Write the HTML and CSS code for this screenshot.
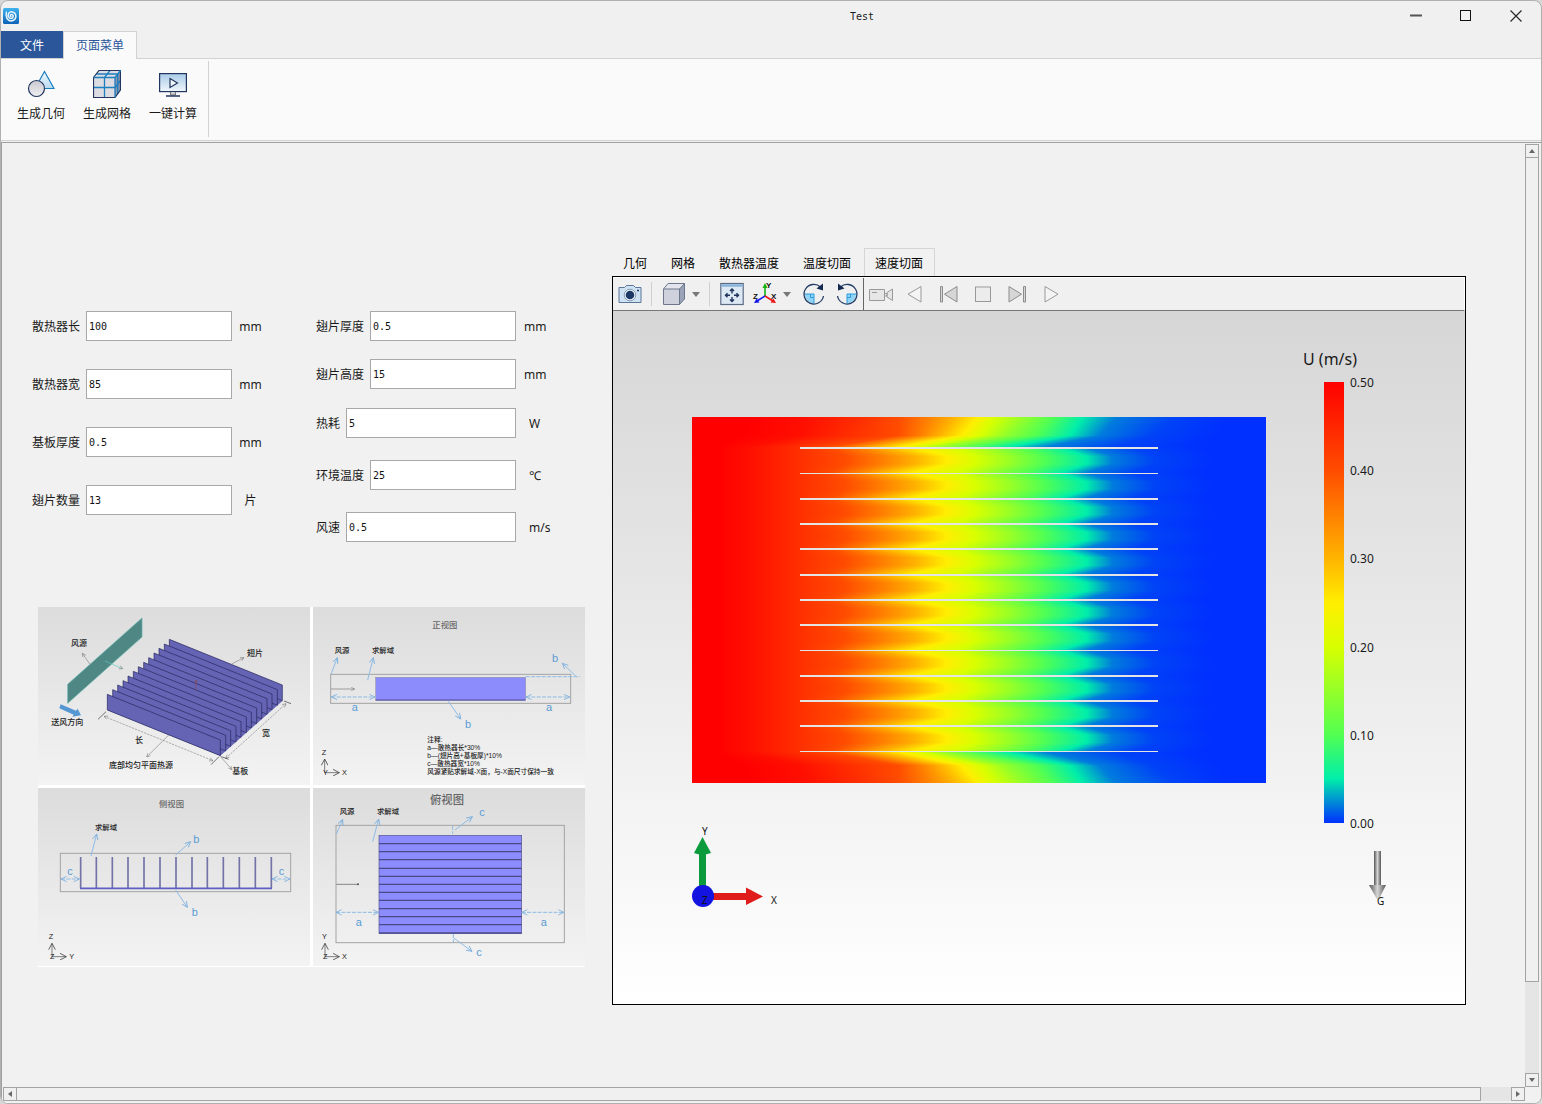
FILE: index.html
```html
<!DOCTYPE html>
<html lang="zh-CN">
<head>
    <meta charset="UTF-8">
    <meta name="viewport" content="width=device-width, initial-scale=1.0">
    <title>Test</title>
    <link rel="stylesheet" href="styles.css">
</head>
<body>
<div class="window">
    <header class="titlebar">
        <svg class="app-icon" viewBox="0 0 16 16">
            <defs>
                <linearGradient id="app-bg" x1="0" y1="0" x2="0" y2="1">
                    <stop offset="0" stop-color="#3fb2ee"/>
                    <stop offset="1" stop-color="#0d62b8"/>
                </linearGradient>
            </defs>
            <rect width="16" height="16" rx="1.5" fill="url(#app-bg)"/>
            <path d="M3.4 4.2C2.4 8.5 4 13 8.2 12.9C12 12.8 13.6 9.4 12.6 6.6C11.6 3.8 7.6 2.8 5.8 5.2C4.2 7.6 5.6 10.6 8.2 10.4C10.6 10.1 10.9 7 8.9 6.5C7.3 6.2 6.7 8.1 8 8.6" fill="none" stroke="#e8f6ff" stroke-width="1.5" stroke-linecap="round"/>
        </svg>
        <span class="window-title">Test</span>
        <div class="window-buttons">
            <button aria-label="最小化"><svg viewBox="0 0 12 12"><path d="M0 5.5H12" stroke="#555" stroke-width="2"/></svg></button>
            <button aria-label="最大化"><svg viewBox="0 0 12 12"><rect x=".5" y=".5" width="10" height="10" fill="none" stroke="#111"/></svg></button>
            <button aria-label="关闭"><svg viewBox="0 0 12 12"><path d="M.5 .5L11.5 11.5M11.5 .5L.5 11.5" stroke="#222" stroke-width="1.1"/></svg></button>
        </div>
    </header>

    <nav class="ribbon-tabs">
        <button class="ribbon-tab file">文件</button>
        <button class="ribbon-tab active">页面菜单</button>
    </nav>

    <div class="ribbon">
        <div class="ribbon-group">
            <button class="ribbon-button">
                <svg viewBox="0 0 28 28">
                    <defs>
                        <linearGradient id="soft-gray" x1="0" y1="0" x2="0" y2="1">
                            <stop offset="0" stop-color="#c9c9d0"/>
                            <stop offset="1" stop-color="#efeff2"/>
                        </linearGradient>
                        <linearGradient id="soft-blue" x1="0" y1="0" x2="0" y2="1">
                            <stop offset="0" stop-color="#f2f9fd"/>
                            <stop offset="1" stop-color="#b9daf0"/>
                        </linearGradient>
                        <linearGradient id="screen-blue" x1="0" y1="0" x2="0" y2="1">
                            <stop offset="0" stop-color="#a9cbe8"/>
                            <stop offset="1" stop-color="#f0f6fb"/>
                        </linearGradient>
                    </defs>
                    <path d="M17.5 1.5L27 18.5H8Z" fill="url(#soft-blue)" stroke="#1c7fc0" stroke-width="1.2"/>
                    <circle cx="9.5" cy="18.5" r="8" fill="url(#soft-gray)" stroke="#22355f" stroke-width="1.2"/>
                </svg>
                <span>生成几何</span>
            </button>
            <button class="ribbon-button">
                <svg viewBox="0 0 28 28">
                    <path d="M.5 7.5L6 .5H27.5L22 7.5V27.5H.5Z" fill="#dcdce2"/>
                    <path d="M22 7.5L27.5 .5V20L22 27.5Z" fill="#8b93ad"/>
                    <path d="M11.5 27.5V7.5L17 .5M.5 17.5H22L27.5 10.5M3.5 4H24.7V24" fill="none" stroke="#1c7fc0" stroke-width="1.3"/>
                    <path d="M.5 7.5L6 .5H27.5V20L22 27.5H.5Z" fill="none" stroke="#22355f" stroke-width="1.2"/>
                    <path d="M.5 7.5H22V27.5M22 7.5L27.5 .5" fill="none" stroke="#1c7fc0" stroke-width="1.3"/>
                </svg>
                <span>生成网格</span>
            </button>
            <button class="ribbon-button">
                <svg viewBox="0 0 28 28">
                    <rect x=".6" y="3.6" width="26.8" height="18" fill="url(#screen-blue)" stroke="#22355f" stroke-width="1.2"/>
                    <path d="M11 8.5V17.5L18.5 13Z" fill="#eef6fb" stroke="#22355f" stroke-width="1.2"/>
                    <path d="M11.5 22V25H16.5V22" fill="#ccc" stroke="#777"/>
                    <path d="M7 26H21" stroke="#22355f" stroke-width="1.4"/>
                </svg>
                <span>一键计算</span>
            </button>
        </div>
    </div>

    <div class="scroll-area">
        <main class="workspace">
            <section class="inputs">
                <form class="params">
                    <div class="param-column">
                        <div class="param"><label for="length">散热器长</label><input id="length" type="text" value="100"><span class="unit">mm</span></div>
                        <div class="param"><label for="width">散热器宽</label><input id="width" type="text" value="85"><span class="unit">mm</span></div>
                        <div class="param"><label for="base">基板厚度</label><input id="base" type="text" value="0.5"><span class="unit">mm</span></div>
                        <div class="param"><label for="count">翅片数量</label><input id="count" type="text" value="13"><span class="unit">片</span></div>
                    </div>
                    <div class="param-column right">
                        <div class="fin-params">
                            <div class="param"><label for="fin-thickness">翅片厚度</label><input id="fin-thickness" type="text" value="0.5"><span class="unit">mm</span></div>
                            <div class="param"><label for="fin-height">翅片高度</label><input id="fin-height" type="text" value="15"><span class="unit">mm</span></div>
                        </div>
                        <div class="condition-params">
                            <div class="param"><label for="heat">热耗</label><input id="heat" type="text" value="5"><span class="unit">W</span></div>
                            <div class="param"><label for="ambient">环境温度</label><input id="ambient" type="text" value="25"><span class="unit">℃</span></div>
                            <div class="param"><label for="speed">风速</label><input id="speed" type="text" value="0.5"><span class="unit">m/s</span></div>
                        </div>
                    </div>
                </form>

                <div class="figures">
                    <!-- isometric view -->
                    <svg class="figure" viewBox="24 21 816 534">
                        <defs>
                            <marker id="tip" viewBox="0 0 12 12" refX="11" refY="6" markerWidth="13" markerHeight="13" markerUnits="userSpaceOnUse" orient="auto-start-reverse">
                                <path d="M1 1L11 6L1 11" fill="none" stroke="#777" stroke-width="1.5"/>
                            </marker>
                            <marker id="blue-tip" viewBox="0 0 20 20" refX="18" refY="10" markerWidth="20" markerHeight="20" markerUnits="userSpaceOnUse" orient="auto-start-reverse">
                                <path d="M1 2L18 10L1 18" fill="none" stroke="#78aede" stroke-width="2.5"/>
                            </marker>
                            <marker id="axis-tip" viewBox="0 0 22 22" refX="20" refY="11" markerWidth="22" markerHeight="22" markerUnits="userSpaceOnUse" orient="auto">
                                <path d="M1 1L20 11L1 21" fill="none" stroke="#444" stroke-width="2.5"/>
                            </marker>
                            <path id="fin" d="M232 283L571 420V467L232 330Z"/>
                        </defs>
                        <path d="M113 253L336 54V111L113 310Z" fill="#4f8784" stroke="#5fb3ad" stroke-width="2"/>
                        <path d="M225 183L278 206" stroke="#5cc8c4" stroke-width="2" marker-end="url(#tip)"/>
                        <path d="M232 330L571 467L758 302L418 165Z" fill="#6463b4"/>
                        <g class="fins">
                            <use href="#fin" x="186" y="-165"/>
                            <use href="#fin" x="171" y="-151"/>
                            <use href="#fin" x="155" y="-138"/>
                            <use href="#fin" x="140" y="-124"/>
                            <use href="#fin" x="124" y="-110"/>
                            <use href="#fin" x="109" y="-96"/>
                            <use href="#fin" x="93" y="-83"/>
                            <use href="#fin" x="78" y="-69"/>
                            <use href="#fin" x="62" y="-55"/>
                            <use href="#fin" x="47" y="-41"/>
                            <use href="#fin" x="31" y="-28"/>
                            <use href="#fin" x="16" y="-14"/>
                            <use href="#fin"/>
                        </g>
                        <path d="M498 270V242M494 248L498 240L502 248" fill="none" stroke="#8f4a52" stroke-width="2"/>
                        <path d="M92 313L88 325L131 344L127 350L153 346L143 326L138 332Z" fill="#5597d3"/>
                        <g class="leader">
                            <path d="M180 193L157 160" marker-end="url(#tip)"/>
                            <path d="M605 192L642 173" marker-end="url(#tip)"/>
                            <path d="M416 405L350 471" marker-end="url(#tip)"/>
                            <path d="M571 469L606 509" marker-end="url(#tip)"/>
                            <path d="M222 349L549 482" stroke-dasharray="7 3" marker-start="url(#tip)" marker-end="url(#tip)"/>
                            <path d="M587 475L768 311" stroke-dasharray="7 3" marker-start="url(#tip)" marker-end="url(#tip)"/>
                        </g>
                        <path d="M204 358L228 335M543 494L567 470M574 470L596 478M762 303L783 311" stroke="#333" stroke-width="2"/>
                        <g class="fig-text">
                            <text x="123" y="138">风源</text>
                            <text x="651" y="169">翅片</text>
                            <text x="64" y="376">送风方向</text>
                            <text x="315" y="428">长</text>
                            <text x="696" y="409">宽</text>
                            <text x="237" y="505">底部均匀平面热源</text>
                            <text x="607" y="523">基板</text>
                        </g>
                    </svg>

                    <!-- front view -->
                    <svg class="figure" viewBox="15 21 816 534">
                        <text class="fig-title" x="373" y="84">正视图</text>
                        <rect class="domain" x="68" y="223" width="720" height="87"/>
                        <rect x="203" y="232" width="450" height="69" fill="#8d8cfd" stroke="#777"/>
                        <path d="M203 300H653" stroke="#4c4b99" stroke-width="3"/>
                        <path d="M69 267H140" stroke="#777" stroke-width="2" marker-end="url(#tip)"/>
                        <g class="dim">
                            <path d="M69 223L88 173" marker-end="url(#blue-tip)"/>
                            <path d="M179 240L196 173" marker-end="url(#blue-tip)"/>
                            <path d="M803 228L763 190" marker-end="url(#blue-tip)"/>
                            <path d="M421 304L458 357" marker-end="url(#blue-tip)"/>
                            <path class="dash" d="M70 291H201" marker-start="url(#blue-tip)" marker-end="url(#blue-tip)"/>
                            <path class="dash" d="M654 291H785" marker-start="url(#blue-tip)" marker-end="url(#blue-tip)"/>
                            <path class="dash" d="M653 230H815"/>
                        </g>
                        <g class="dim-text">
                            <text x="131" y="333">a</text>
                            <text x="714" y="333">a</text>
                            <text x="732" y="186">b</text>
                            <text x="471" y="384">b</text>
                        </g>
                        <g class="fig-text small">
                            <text x="80" y="160">风源</text>
                            <text x="192" y="160">求解域</text>
                        </g>
                        <g class="fig-text note">
                            <text x="358" y="427">注释:</text>
                            <text x="358" y="451">a—散热器长*30%</text>
                            <text x="358" y="474">b—(翅片高+基板厚)*10%</text>
                            <text x="358" y="498">c—散热器宽*10%</text>
                            <text x="358" y="521">风源紧贴求解域-X面，与-X面尺寸保持一致</text>
                        </g>
                        <g class="axis">
                            <path d="M50 518V477" marker-end="url(#axis-tip)"/>
                            <path d="M50 518H94" marker-end="url(#axis-tip)"/>
                            <text x="41" y="464">Z</text>
                            <text x="45" y="526">Y</text>
                            <text x="102" y="526">X</text>
                        </g>
                    </svg>

                    <!-- side view -->
                    <svg class="figure" viewBox="24 18 816 534">
                        <text class="fig-title" x="387" y="74">侧视图</text>
                        <rect class="domain" x="91" y="214" width="691" height="115"/>
                        <path d="M152 225V318M199 225V318M247 225V318M294 225V318M342 225V318M390 225V318M438 225V318M486 225V318M532 225V318M580 225V318M628 225V318M676 225V318M724 225V318" stroke="#7473a8" stroke-width="5"/>
                        <path d="M150 319H726" stroke="#5f5ec4" stroke-width="5"/>
                        <g class="dim">
                            <path d="M183 222L200 156" marker-end="url(#blue-tip)"/>
                            <path d="M437 219L482 179" marker-end="url(#blue-tip)"/>
                            <path d="M437 324L472 376" marker-end="url(#blue-tip)"/>
                            <path class="dash" d="M93 291H148" marker-start="url(#blue-tip)" marker-end="url(#blue-tip)"/>
                            <path class="dash" d="M726 291H780" marker-start="url(#blue-tip)" marker-end="url(#blue-tip)"/>
                        </g>
                        <g class="dim-text">
                            <text x="112" y="279">c</text>
                            <text x="746" y="279">c</text>
                            <text x="490" y="182">b</text>
                            <text x="485" y="403">b</text>
                        </g>
                        <g class="fig-text small">
                            <text x="195" y="143">求解域</text>
                        </g>
                        <g class="axis">
                            <path d="M66 524V484" marker-end="url(#axis-tip)"/>
                            <path d="M66 524H109" marker-end="url(#axis-tip)"/>
                            <text x="56" y="470">Z</text>
                            <text x="60" y="532">Z</text>
                            <text x="118" y="532">Y</text>
                        </g>
                    </svg>

                    <!-- top view -->
                    <svg class="figure" viewBox="15 18 816 534">
                        <text class="fig-title big" x="366" y="66">俯视图</text>
                        <rect class="domain" x="84" y="130" width="685" height="352"/>
                        <rect x="213" y="160" width="428" height="294" fill="#8d8cfd" stroke="#55548f" stroke-width="2"/>
                        <path d="M213 185H641M213 209H641M213 233H641M213 259H641M213 283H641M213 307H641M213 331H641M213 355H641M213 380H641M213 404H641M213 428H641M213 453H641" stroke="#4a4988" stroke-width="4"/>
                        <path d="M85 307H153" stroke="#555" stroke-width="2"/>
                        <circle cx="150" cy="307" r="3" fill="#555"/>
                        <g class="dim">
                            <path d="M85 157L104 112" marker-end="url(#blue-tip)"/>
                            <path d="M194 179L212 111" marker-end="url(#blue-tip)"/>
                            <path d="M441 144L493 104" marker-end="url(#blue-tip)"/>
                            <path d="M437 468L492 508" marker-end="url(#blue-tip)"/>
                            <path class="dash" d="M84 391H212" marker-start="url(#blue-tip)" marker-end="url(#blue-tip)"/>
                            <path class="dash" d="M641 391H768" marker-start="url(#blue-tip)" marker-end="url(#blue-tip)"/>
                            <path class="dash" d="M434 132V156M436 456V480"/>
                        </g>
                        <g class="dim-text">
                            <text x="143" y="433">a</text>
                            <text x="698" y="433">a</text>
                            <text x="514" y="102">c</text>
                            <text x="505" y="523">c</text>
                        </g>
                        <g class="fig-text small">
                            <text x="95" y="97">风源</text>
                            <text x="207" y="97">求解域</text>
                        </g>
                        <g class="axis">
                            <path d="M51 524V484" marker-end="url(#axis-tip)"/>
                            <path d="M51 524H94" marker-end="url(#axis-tip)"/>
                            <text x="42" y="470">Y</text>
                            <text x="45" y="532">Z</text>
                            <text x="102" y="532">X</text>
                        </g>
                    </svg>
                </div>
            </section>

            <section class="viewer">
                <div class="viewer-tabs">
                    <button>几何</button>
                    <button>网格</button>
                    <button>散热器温度</button>
                    <button>温度切面</button>
                    <button class="active">速度切面</button>
                </div>
                <div class="viewer-frame">
                    <div class="toolbar">
                        <div class="view-tools">
                            <button class="tool" aria-label="截图">
                                <svg viewBox="0 0 24 24">
                                    <path d="M1 5.500H6.500L8.500 3.500H15.500L17.500 5.500H23V20.500H1Z" fill="#cfe2f3" stroke="#5b7797"/>
                                    <circle cx="12" cy="13" r="5.800" fill="#f2f6fa" stroke="#6e88a5" stroke-width=".8"/>
                                    <circle cx="12" cy="13" r="4.300" fill="#1b3866"/>
                                    <path d="M19 8.500H21" stroke="#1b3866" stroke-width="1.5"/>
                                </svg>
                            </button>
                            <span class="separator"></span>
                            <button class="tool" aria-label="显示模式">
                                <svg viewBox="0 0 24 24">
                                    <path d="M1.500 7L6 1.500H22.500V17L17.500 22.500H1.500Z" fill="#e4e5ec"/>
                                    <path d="M1.500 7H17.500V22.500H1.500Z" fill="#cfd2dc"/>
                                    <path d="M17.500 7L22.500 1.500V17L17.500 22.500Z" fill="#9ba3b8"/>
                                    <path d="M1.500 7L6 1.500H22.500V17L17.500 22.500H1.500ZM1.500 7H17.500V22.500M17.500 7L22.500 1.500" fill="none" stroke="#6d778c"/>
                                </svg>
                            </button>
                            <button class="drop" aria-label="显示模式列表"><svg viewBox="0 0 8 5"><path d="M0 0H8L4 5Z" fill="#777"/></svg></button>
                            <span class="separator"></span>
                            <button class="tool" aria-label="适应窗口">
                                <svg viewBox="0 0 24 24">
                                    <rect x=".8" y="1.500" width="22.400" height="21" fill="#dce8f4" stroke="#5c6b85" stroke-width="1.2"/>
                                    <path d="M1.500 3.500H22.500" stroke="#8ab5da" stroke-width="2.500"/>
                                    <path d="M12 7V11.500M12 15V19.500M5.500 13.200H10M14 13.200H18.500M10 9L12 7L14 9M10 17.500L12 19.500L14 17.500M7.500 11.200L5.500 13.200L7.500 15.200M16.500 11.200L18.500 13.200L16.500 15.200" fill="none" stroke="#1d3358" stroke-width="1.4"/>
                                </svg>
                            </button>
                            <button class="tool" aria-label="视图方向">
                                <svg viewBox="0 0 24 24">
                                    <path d="M12 14V5" stroke="#12b312" stroke-width="1.6"/>
                                    <path d="M9.500 6L12 1L14.500 6Z" fill="#12b312"/>
                                    <path d="M12 14L4 19" stroke="#1515f0" stroke-width="1.6"/>
                                    <path d="M1 21L3.500 16.500L6.500 20.500Z" fill="#1515f0"/>
                                    <path d="M12 14L20 19" stroke="#f01515" stroke-width="1.6"/>
                                    <path d="M23 21L20.500 16.500L17.500 20.500Z" fill="#f01515"/>
                                    <g class="axes-letters">
                                        <text x="13" y="6">Y</text>
                                        <text x="0" y="17">Z</text>
                                        <text x="18" y="17">X</text>
                                    </g>
                                </svg>
                            </button>
                            <button class="drop" aria-label="视图方向列表"><svg viewBox="0 0 8 5"><path d="M0 0H8L4 5Z" fill="#777"/></svg></button>
                            <div class="rotate-tools">
                                <button class="tool" aria-label="顺时针旋转">
                                    <svg viewBox="0 0 24 24">
                                        <path d="M12 12H3A9.500 9.500 0 0 0 12 21.500Z" fill="#8fd3f6"/>
                                        <path d="M2.500 12H12V21.500M8.500 12V15.500H12" fill="none" stroke="#2a9ddc"/>
                                        <path d="M18.500 5A9.800 9.800 0 1 0 21.500 14" fill="none" stroke="#223b63" stroke-width="1.3"/>
                                        <path d="M21 1.500V8.500L14.500 6.500Z" fill="#14294f"/>
                                    </svg>
                                </button>
                                <button class="tool" aria-label="逆时针旋转">
                                    <svg viewBox="0 0 24 24">
                                        <path d="M12 12H21A9.500 9.500 0 0 1 12 21.500Z" fill="#8fd3f6"/>
                                        <path d="M21.500 12H12V21.500M15.500 12V15.500H12" fill="none" stroke="#2a9ddc"/>
                                        <path d="M5.500 5A9.800 9.800 0 1 1 2.500 14" fill="none" stroke="#223b63" stroke-width="1.3"/>
                                        <path d="M3 1.500V8.500L9.500 6.500Z" fill="#14294f"/>
                                    </svg>
                                </button>
                            </div>
                        </div>
                        <div class="play-tools">
                            <button class="tool" aria-label="录制">
                                <svg viewBox="0 0 24 24"><path d="M.5 7.500H15.500V18.500H.5ZM18 10.500L23.500 7V18.500L18 15Z" fill="#e6e6e6" stroke="#999"/><path d="M15.500 11.500H18V14H15.500M3 10.500H8" fill="none" stroke="#999"/></svg>
                            </button>
                            <button class="tool" aria-label="倒放">
                                <svg viewBox="0 0 24 24"><path d="M18 4.500V20L5 12.200Z" fill="#f4f4f4" stroke="#999"/></svg>
                            </button>
                            <button class="tool" aria-label="上一帧">
                                <svg viewBox="0 0 24 24"><path d="M3.500 4.500H5.500V20H3.500ZM20 4.500V20L7.500 12.200Z" fill="#d6d6d6" stroke="#8c8c8c"/></svg>
                            </button>
                            <button class="tool" aria-label="停止">
                                <svg viewBox="0 0 24 24"><rect x="4.500" y="5" width="15" height="14.500" fill="#ececec" stroke="#999"/></svg>
                            </button>
                            <button class="tool" aria-label="下一帧">
                                <svg viewBox="0 0 24 24"><path d="M20.500 4.500H18.500V20H20.500ZM4 4.500V20L16.500 12.200Z" fill="#d6d6d6" stroke="#8c8c8c"/></svg>
                            </button>
                            <button class="tool" aria-label="播放">
                                <svg viewBox="0 0 24 24"><path d="M6 4.500V20L19 12.200Z" fill="#f4f4f4" stroke="#999"/></svg>
                            </button>
                        </div>
                    </div>

                    <div class="scene">
                        <div class="plot">
                            <canvas id="field" width="574" height="366"></canvas>
                            <svg class="triad" viewBox="0 0 90 88">
                                <rect x="7" y="26" width="7" height="42" fill="#0b9b3c"/>
                                <path d="M2 31L10.500 15L19 31Q10 34 2 31Z" fill="#0b9b3c"/>
                                <rect x="20" y="71" width="36" height="7" fill="#e01b1b"/>
                                <path d="M54 65.500L71 74.500L54 83Z" fill="#e01b1b"/>
                                <circle cx="11" cy="74" r="11" fill="#1414e0"/>
                                <text x="10" y="13">Y</text>
                                <text x="79" y="82">X</text>
                                <text x="10" y="82">Z</text>
                            </svg>
                        </div>
                        <div class="legend">
                            <div class="legend-title">U (m/s)</div>
                            <div class="legend-scale">
                                <div class="legend-bar"></div>
                                <div class="legend-labels">
                                    <span>0.50</span>
                                    <span>0.40</span>
                                    <span>0.30</span>
                                    <span>0.20</span>
                                    <span>0.10</span>
                                    <span>0.00</span>
                                </div>
                            </div>
                            <svg class="gravity" viewBox="0 0 18 58">
                                <defs>
                                    <linearGradient id="metal">
                                        <stop offset="0" stop-color="#555"/>
                                        <stop offset=".5" stop-color="#d5d5d5"/>
                                        <stop offset="1" stop-color="#555"/>
                                    </linearGradient>
                                </defs>
                                <rect x="5" y="0" width="7" height="35" fill="url(#metal)"/>
                                <path d="M0 34H17L9 50Z" fill="url(#metal)"/>
                                <text x="8" y="54">G</text>
                            </svg>
                        </div>
                    </div>
                </div>
            </section>
        </main>

        <div class="scrollbar vertical">
            <button aria-label="向上滚动"><svg viewBox="0 0 6 4"><path d="M0 4L3 0L6 4Z" fill="#666"/></svg></button>
            <div class="track"><div class="thumb"></div></div>
            <button aria-label="向下滚动"><svg viewBox="0 0 6 4"><path d="M0 0L3 4L6 0Z" fill="#666"/></svg></button>
        </div>
        <div class="scrollbar horizontal">
            <button aria-label="向左滚动"><svg viewBox="0 0 4 6"><path d="M4 0L0 3L4 6Z" fill="#666"/></svg></button>
            <div class="track"><div class="thumb"></div></div>
            <button aria-label="向右滚动"><svg viewBox="0 0 4 6"><path d="M0 0L4 3L0 6Z" fill="#666"/></svg></button>
        </div>
    </div>
</div>
<script src="field.js"></script>
</body>
</html>
```

FILE: styles.css
```css
* {
    box-sizing: border-box;
}

body {
    margin: 0;
    background: #d8d8d8;
    color: #1a1a1a;
    font-family: "Noto Sans", "Noto Sans CJK SC", sans-serif;
    font-size: 12px;
}

button {
    border: 0;
    padding: 0;
    background: none;
    color: inherit;
    font: inherit;
}

svg {
    display: block;
}

.window {
    display: flex;
    flex-direction: column;
    height: 100vh;
    border: 1px solid #b0b0b0;
    border-radius: 8px;
    background: #f0f0f0;
    overflow: hidden;
}

/* title bar */
.titlebar {
    display: grid;
    grid-template-columns: 1fr auto 1fr;
    align-items: center;
    height: 30px;
    padding-left: 2px;
    flex: none;
}

.app-icon {
    width: 16px;
    height: 16px;
}

.window-title {
    padding-left: 180px;
    font-family: "DejaVu Sans Mono", monospace;
    font-size: 10px;
}

.window-buttons {
    display: flex;
    justify-content: flex-end;
}

.window-buttons button {
    display: flex;
    align-items: center;
    justify-content: center;
    width: 50px;
    height: 30px;
}

.window-buttons svg {
    width: 12px;
    height: 12px;
}

/* ribbon */
.ribbon-tabs {
    display: flex;
    height: 28px;
    flex: none;
    border-bottom: 1px solid #d2d2d2;
}

.ribbon-tab {
    width: 62px;
    height: 27px;
}

.ribbon-tab.file {
    background: #2b579a;
    color: #fff;
}

.ribbon-tab.active {
    width: 74px;
    height: 28px;
    padding-bottom: 2px;
    border: 1px solid #d2d2d2;
    border-bottom: 0;
    background: #fafafa;
    color: #2b579a;
}

.ribbon {
    height: 82px;
    flex: none;
    padding: 2px 7px;
    border-bottom: 1px solid #d2d2d2;
    background: #fafafa;
}

.ribbon-group {
    display: flex;
    width: 201px;
    height: 76px;
    border-right: 1px solid #d2d2d2;
}

.ribbon-button {
    display: flex;
    flex-direction: column;
    align-items: center;
    gap: 6px;
    width: 66px;
    padding-top: 9px;
}

.ribbon-button svg {
    width: 28px;
    height: 28px;
}

/* page area with its scroll bars */
.scroll-area {
    display: grid;
    grid-template-columns: minmax(0, 1fr) 14px;
    grid-template-rows: minmax(0, 1fr) 14px;
    flex: 1;
    min-height: 0;
    margin-top: 1px;
    padding: 1px 2px 2px 1px;
    border-top: 1px solid #a0a0a0;
    border-left: 1px solid #a0a0a0;
    background: #f1f1f1;
}

.workspace {
    display: flex;
    padding: 104px 59px 82px 29px;
    overflow: hidden;
}

.scrollbar {
    display: flex;
    background: #e5e5e5;
}

.scrollbar.vertical {
    flex-direction: column;
}

.scrollbar button {
    display: flex;
    align-items: center;
    justify-content: center;
    width: 14px;
    height: 14px;
    flex: none;
    border: 1px solid #a3a3a3;
    background: #f0f0f0;
}

.scrollbar svg {
    width: 6px;
    height: 6px;
}

.track {
    display: flex;
    flex: 1;
}

.thumb {
    border: 1px solid #a3a3a3;
    background: #f0f0f0;
}

.vertical .thumb {
    width: 14px;
    height: 90%;
    border-top: 0;
}

.horizontal .thumb {
    width: 98%;
    border-left: 0;
}

/* parameters */
.inputs {
    width: 580px;
    flex: none;
    padding-top: 63px;
}

.params {
    display: grid;
    grid-template-columns: 284px 1fr;
}

.param-column {
    display: flex;
    flex-direction: column;
    gap: 28px;
}

.param-column.right {
    gap: 19px;
}

.fin-params,
.condition-params {
    display: flex;
    flex-direction: column;
    gap: 18px;
}

.condition-params {
    gap: 22px;
}

.param {
    display: flex;
    align-items: center;
    height: 30px;
}

.param label {
    margin-right: 6px;
}

.param input {
    flex: 1;
    min-width: 0;
    height: 30px;
    padding: 0 2px;
    border: 1px solid #a8a8a8;
    border-radius: 0;
    background: #fff;
    color: #111;
    font-family: "DejaVu Sans Mono", monospace;
    font-size: 10px;
}

.unit {
    width: 84px;
    padding-left: 8px;
}

.param-column:first-child .unit {
    width: 38px;
    margin-right: 46px;
    padding: 0 8px 0 7px;
    text-align: center;
}

.condition-params .unit {
    padding-left: 13px;
}

.param-column.right .param {
    width: 284px;
}

/* sketches */
.figures {
    display: grid;
    grid-template-columns: 272px 272px;
    gap: 3px;
    width: 547px;
    margin: 65px 0 0 6px;
    padding-bottom: 1px;
    background: #fff;
}

.figure {
    width: 272px;
    height: 178px;
    background: linear-gradient(#dcdcdc, #f3f3f3);
}

.fins {
    fill: #6463b4;
    stroke: #26265a;
    stroke-width: 2;
}

.leader {
    fill: none;
    stroke: #888;
    stroke-width: 2;
}

.domain {
    fill: none;
    stroke: #a3a3a3;
    stroke-width: 3;
}

.dim {
    fill: none;
    stroke: #8fbce4;
    stroke-width: 3;
}

.dash {
    stroke-dasharray: 12 4;
}

.fig-text {
    fill: #222;
    font-size: 24px;
    font-weight: 500;
}

.fig-text.small,
.fig-text.note {
    font-family: "Liberation Sans", "Noto Sans CJK SC", sans-serif;
    font-size: 22px;
}

.fig-text.note {
    font-size: 20px;
}

.fig-title {
    fill: #666;
    font-size: 25px;
    font-weight: 500;
}

.fig-title.big {
    font-size: 34px;
}

.dim-text {
    fill: #5b9bd5;
    font-family: "Liberation Sans", sans-serif;
    font-size: 33px;
}

.axis {
    fill: none;
    stroke: #444;
    stroke-width: 2;
}

.axis text {
    fill: #222;
    stroke: none;
    font-family: "Liberation Sans", sans-serif;
    font-size: 22px;
}

/* result viewer */
.viewer {
    display: flex;
    flex-direction: column;
    flex: 1;
    min-width: 0;
}

.viewer-tabs {
    display: flex;
    height: 28px;
    flex: none;
}

.viewer-tabs button {
    padding: 1px 13px 0 11px;
    color: #000;
}

.viewer-tabs .active {
    padding: 0 11px 0 10px;
    border: 1px solid #d5d5d5;
    border-bottom: 0;
}

.viewer-frame {
    display: flex;
    flex-direction: column;
    flex: 1;
    border: 1px solid #000;
}

.toolbar {
    display: flex;
    height: 34px;
    flex: none;
    border: 1px solid #fff;
    border-width: 1px 1px 0 0;
    border-bottom: 1px solid #777;
    background: #f0f0f0;
}

.view-tools,
.play-tools,
.rotate-tools {
    display: flex;
    align-items: center;
}

.view-tools {
    border-right: 1px solid #666;
}

.rotate-tools {
    margin-left: 2px;
}

.separator {
    width: 1px;
    height: 24px;
    margin: 0 5px;
    background: #d0d0d0;
}

.tool,
.drop {
    display: flex;
    align-items: center;
    justify-content: center;
    width: 33px;
    height: 32px;
}

.play-tools .tool {
    width: 34px;
}

.tool svg {
    width: 24px;
    height: 24px;
    overflow: visible;
}

.drop {
    width: 12px;
    margin-right: 2px;
}

.drop svg {
    width: 8px;
    height: 5px;
}

.axes-letters {
    fill: #111;
    font-family: "Liberation Sans", sans-serif;
    font-size: 8px;
    font-weight: bold;
}

.scene {
    display: grid;
    grid-template-columns: minmax(0, 1fr) 199px;
    flex: 1;
    padding-left: 79px;
    background: linear-gradient(#d6d6d6, #fff);
}

.plot {
    padding-top: 106px;
}

#field {
    display: block;
    width: 100%;
    height: 366px;
}

.triad {
    width: 90px;
    height: 88px;
    margin-top: 39px;
}

.triad text,
.gravity text {
    fill: #111;
    font-size: 10px;
}

.legend {
    padding: 36px 0 0 37px;
}

.legend-title {
    font-size: 16px;
    line-height: 24px;
}

.legend-scale {
    display: flex;
    gap: 6px;
    height: 441px;
    margin: 11px 0 28px 21px;
}

.legend-bar {
    width: 20px;
    background: linear-gradient(#ff0000, #ff4c00 20%, #ffb400 40%, #ffee00 50%, #d8ff00 60%, #52ff52 80%, #00eeaa 90%, #0030ff);
}

.legend-labels {
    display: flex;
    flex-direction: column;
    justify-content: space-between;
    margin: -8px 0 -10px;
    line-height: 18px;
}

.gravity {
    width: 18px;
    height: 58px;
    margin-left: 66px;
}
```

FILE: field.js
```js
// speed at each contour, and the colour it is drawn in
const levels = [0.5, 0.48, 0.44, 0.4, 0.35, 0.3, 0.25, 0.2, 0.15, 0.1, 0.05, 0.02, 0.005, 0];
const colorMap = [
    [0, [0, 48, 255]],
    [0.05, [0, 238, 170]],
    [0.1, [82, 255, 82]],
    [0.2, [216, 255, 0]],
    [0.25, [255, 238, 0]],
    [0.3, [255, 180, 0]],
    [0.4, [255, 76, 0]],
    [0.5, [255, 0, 0]]
];

// x of every contour along a few typical rows
const wall =    [60, 115, 168, 206, 236, 262, 285, 302, 331, 359, 390, 424, 482, 535];
const bypass =  [50, 108, 157, 206, 229, 248, 269, 289, 312, 344, 378, 407, 459, 524];
const outer =   [25, 57, 102, 134, 157, 180, 204, 225, 248, 275, 313, 352, 421, 505];
const finSide = [25, 57, 105, 139, 164, 189, 220, 265, 298, 333, 369, 394, 440, 512];
const channel = [25, 57, 105, 153, 191, 224, 254, 283, 319, 351, 394, 420, 462, 520];

// [y, thickness] of the fins
const fins = [
    [30, 2], [56, 1], [81, 2], [106, 2], [131, 2], [157, 2], [182, 2],
    [207, 2], [233, 1], [258, 2], [283, 2], [308, 2], [334, 1]
];

function mix(a, b, t) {
    return a.map((v, i) => v + (b[i] - v) * t);
}

function contoursAt(y) {
    const first = fins[0][0];
    const last = fins[fins.length - 1][0];
    if (y < 18) return mix(wall, bypass, y / 18);
    if (y < first) return mix(bypass, outer, (y - 18) / (first - 18));
    if (y > 348) return mix(bypass, wall, (y - 348) / 18);
    if (y > last) return mix(outer, bypass, (y - last) / (348 - last));

    const pitch = (last - first) / (fins.length - 1);
    const pos = ((y - first) % pitch) / pitch;
    const t = Math.min(1, Math.min(pos, 1 - pos) * 2 / 0.7);
    return mix(finSide, channel, t);
}

function speedAt(x, xs) {
    if (x <= xs[0]) return levels[0];
    for (let i = 1; i < xs.length; i++) {
        if (x < xs[i]) {
            const t = (x - xs[i - 1]) / (xs[i] - xs[i - 1]);
            return levels[i - 1] + (levels[i] - levels[i - 1]) * t;
        }
    }
    return 0;
}

function colorOf(speed) {
    for (let i = 1; i < colorMap.length; i++) {
        const [lo, loColor] = colorMap[i - 1];
        const [hi, hiColor] = colorMap[i];
        if (speed <= hi) return mix(loColor, hiColor, (speed - lo) / (hi - lo));
    }
    return colorMap[colorMap.length - 1][1];
}

const canvas = document.getElementById('field');
const ctx = canvas.getContext('2d');
const image = ctx.createImageData(canvas.width, canvas.height);

for (let y = 0; y < canvas.height; y++) {
    const xs = contoursAt(y);
    for (let x = 0; x < canvas.width; x++) {
        const [r, g, b] = colorOf(speedAt(x, xs));
        image.data.set([r, g, b, 255], (y * canvas.width + x) * 4);
    }
}
ctx.putImageData(image, 0, 0);

ctx.fillStyle = '#e4e4e4';
fins.forEach(([y, thickness]) => ctx.fillRect(108, y, 358, thickness));
```
